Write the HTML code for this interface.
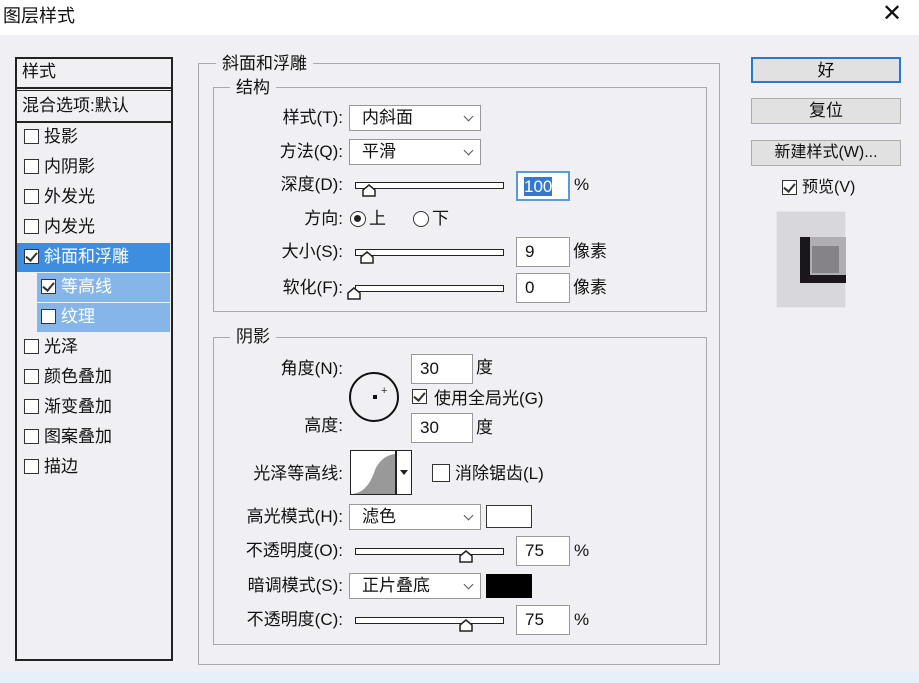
<!DOCTYPE html>
<html><head><meta charset="utf-8"><style>
*{margin:0;padding:0;box-sizing:border-box}
body{width:919px;height:683px;background:#f0eff3;font-family:"Liberation Sans","Noto Sans CJK SC",sans-serif;font-size:17px;color:#111;position:relative;overflow:hidden}
.a{position:absolute;white-space:nowrap;line-height:20px}
.r{text-align:right}
.box{position:absolute;border:1px solid #a9a9ad}
.cb{position:absolute;width:15px;height:15px;border:1px solid #333;background:#fff}
.cb.on::after{content:"";position:absolute;left:3px;top:0px;width:5px;height:9px;border:solid #333;border-width:0 2px 2px 0;transform:rotate(40deg)}
.sel{position:absolute;height:26px;border:1px solid #999;background:#fff;padding-left:12px;line-height:24px}
.sel::after{content:"";position:absolute;right:8px;top:7px;width:6px;height:6px;border:solid #555;border-width:0 1.5px 1.5px 0;transform:rotate(45deg)}
.inp{position:absolute;width:54px;height:30px;border:1px solid #999;background:#fff;padding-left:8px;line-height:28px}
.trk{position:absolute;height:7px;border:1.5px solid #222;background:#fff;width:149px}
.th{position:absolute;width:14px;height:13px}
.btn{position:absolute;left:751px;width:150px;height:26px;border:1px solid #adadad;background:#e1e1e1;text-align:center;line-height:24px}
.item{position:absolute;left:17px;width:153px;height:29px}
</style></head><body>
<div style="position:absolute;left:0;top:0;width:919px;height:35px;background:#fff"></div>
<div class="a" style="left:3px;top:6px;font-size:18px">图层样式</div>
<div class="a" style="left:882px;top:4px;font-size:24px;font-weight:300">✕</div>

<div style="position:absolute;left:15px;top:57px;width:158px;height:604px;border:2px solid #222;background:#f0eff3"></div>
<div class="a" style="left:22px;top:62px">样式</div>
<div style="position:absolute;left:16px;top:87px;width:156px;height:4px;border-top:2px solid #222;border-bottom:1px solid #222"></div>
<div class="a" style="left:22px;top:96px">混合选项:默认</div>
<div style="position:absolute;left:16px;top:121px;width:156px;border-top:2px solid #222"></div>
<div class="item" style="top:243px;background:#3d8ee0"></div>
<div class="item" style="top:273px;left:37px;width:133px;background:#86b6e9"></div>
<div class="item" style="top:303px;left:37px;width:133px;background:#86b6e9"></div>
<div class="cb" style="left:24px;top:129px"></div><div class="a" style="left:44px;top:127px">投影</div>
<div class="cb" style="left:24px;top:159px"></div><div class="a" style="left:44px;top:157px">内阴影</div>
<div class="cb" style="left:24px;top:189px"></div><div class="a" style="left:44px;top:187px">外发光</div>
<div class="cb" style="left:24px;top:219px"></div><div class="a" style="left:44px;top:217px">内发光</div>
<div class="cb on" style="left:24px;top:249px"></div><div class="a" style="left:44px;top:247px;color:#fff">斜面和浮雕</div>
<div class="cb on" style="left:41px;top:279px"></div><div class="a" style="left:61px;top:277px;color:#fff">等高线</div>
<div class="cb" style="left:41px;top:309px"></div><div class="a" style="left:61px;top:307px;color:#fff">纹理</div>
<div class="cb" style="left:24px;top:339px"></div><div class="a" style="left:44px;top:337px">光泽</div>
<div class="cb" style="left:24px;top:369px"></div><div class="a" style="left:44px;top:367px">颜色叠加</div>
<div class="cb" style="left:24px;top:399px"></div><div class="a" style="left:44px;top:397px">渐变叠加</div>
<div class="cb" style="left:24px;top:429px"></div><div class="a" style="left:44px;top:427px">图案叠加</div>
<div class="cb" style="left:24px;top:459px"></div><div class="a" style="left:44px;top:457px">描边</div>

<div class="box" style="left:198px;top:63px;width:522px;height:602px"></div>
<div class="a" style="left:216px;top:54px;background:#f0eff3;padding:0 6px">斜面和浮雕</div>
<div class="box" style="left:213px;top:87px;width:494px;height:225px"></div>
<div class="a" style="left:230px;top:78px;background:#f0eff3;padding:0 6px">结构</div>
<div class="box" style="left:213px;top:337px;width:494px;height:308px"></div>
<div class="a" style="left:230px;top:327px;background:#f0eff3;padding:0 6px">阴影</div>
<div style="position:absolute;left:0;top:672px;width:919px;height:11px;background:#e6f0fa"></div>

<div class="a r" style="right:576px;top:108px">样式(T):</div>
<div class="sel" style="left:349px;top:105px;width:132px">内斜面</div>
<div class="a r" style="right:576px;top:142px">方法(Q):</div>
<div class="sel" style="left:349px;top:139px;width:132px">平滑</div>
<div class="a r" style="right:576px;top:175px">深度(D):</div>
<div class="trk" style="left:355px;top:182px"></div>
<svg class="th" style="left:362px;top:184px" viewBox="0 0 14 13"><path d="M1 12V6L7 1L13 6V12Z" fill="#fff" stroke="#222" stroke-width="1.5"/></svg>
<div class="inp" style="left:516px;top:171px;border:2px solid #5a9ad8;padding-left:6px"><span style="background:#3478d0;color:#fff">100</span></div>
<div class="a" style="left:574px;top:175px">%</div>
<div class="a r" style="right:576px;top:209px">方向:</div>
<div style="position:absolute;left:350px;top:211px;width:16px;height:16px;border:1.5px solid #333;border-radius:50%;background:#fff"><div style="position:absolute;left:3px;top:3px;width:7px;height:7px;border-radius:50%;background:#222"></div></div>
<div class="a" style="left:369px;top:209px">上</div>
<div style="position:absolute;left:413px;top:211px;width:16px;height:16px;border:1.5px solid #333;border-radius:50%;background:#fff"></div>
<div class="a" style="left:432px;top:209px">下</div>
<div class="a r" style="right:576px;top:242px">大小(S):</div>
<div class="trk" style="left:355px;top:249px"></div>
<svg class="th" style="left:360px;top:251px" viewBox="0 0 14 13"><path d="M1 12V6L7 1L13 6V12Z" fill="#fff" stroke="#222" stroke-width="1.5"/></svg>
<div class="inp" style="left:516px;top:237px">9</div>
<div class="a" style="left:573px;top:242px">像素</div>
<div class="a r" style="right:576px;top:278px">软化(F):</div>
<div class="trk" style="left:355px;top:285px"></div>
<svg class="th" style="left:347px;top:287px" viewBox="0 0 14 13"><path d="M1 12V6L7 1L13 6V12Z" fill="#fff" stroke="#222" stroke-width="1.5"/></svg>
<div class="inp" style="left:516px;top:273px">0</div>
<div class="a" style="left:573px;top:278px">像素</div>

<div class="a r" style="right:576px;top:359px">角度(N):</div>
<div class="inp" style="left:411px;top:354px;width:62px">30</div>
<div class="a" style="left:476px;top:358px">度</div>
<div style="position:absolute;left:349px;top:372px;width:50px;height:50px;border:2px solid #111;border-radius:50%"></div>
<div style="position:absolute;left:373px;top:395px;width:4px;height:4px;background:#111"></div>
<div class="a" style="left:381px;top:381px;font-size:11px;color:#333">+</div>
<div class="cb on" style="left:412px;top:389px"></div>
<div class="a" style="left:434px;top:389px">使用全局光(G)</div>
<div class="a r" style="right:576px;top:416px">高度:</div>
<div class="inp" style="left:411px;top:413px;width:62px">30</div>
<div class="a" style="left:476px;top:418px">度</div>
<div class="a r" style="right:576px;top:464px">光泽等高线:</div>
<div style="position:absolute;left:350px;top:450px;width:62px;height:45px;border:1.5px solid #222;background:#fff;overflow:hidden">
<svg width="44" height="42" style="position:absolute;left:2px;top:1px" viewBox="0 0 44 42"><path d="M0 42C12 40 18 30 22 18C26 8 34 3 42 2V42Z" fill="#999"/></svg>
<div style="position:absolute;left:44px;top:0;width:1.5px;height:45px;background:#222"></div>
<div style="position:absolute;left:49px;top:19px;border:4px solid transparent;border-top:5px solid #222"></div>
</div>
<div class="cb" style="left:432px;top:464px;width:18px;height:18px"></div>
<div class="a" style="left:455px;top:464px">消除锯齿(L)</div>
<div class="a r" style="right:576px;top:507px">高光模式(H):</div>
<div class="sel" style="left:349px;top:504px;width:132px">滤色</div>
<div style="position:absolute;left:486px;top:505px;width:46px;height:23px;border:1.5px solid #333;background:#fff"></div>
<div class="a r" style="right:576px;top:541px">不透明度(O):</div>
<div class="trk" style="left:355px;top:548px"></div>
<svg class="th" style="left:459px;top:550px" viewBox="0 0 14 13"><path d="M1 12V6L7 1L13 6V12Z" fill="#fff" stroke="#222" stroke-width="1.5"/></svg>
<div class="inp" style="left:516px;top:536px">75</div>
<div class="a" style="left:574px;top:541px">%</div>
<div class="a r" style="right:576px;top:576px">暗调模式(S):</div>
<div class="sel" style="left:349px;top:573px;width:132px">正片叠底</div>
<div style="position:absolute;left:486px;top:574px;width:46px;height:24px;background:#000"></div>
<div class="a r" style="right:576px;top:610px">不透明度(C):</div>
<div class="trk" style="left:355px;top:617px"></div>
<svg class="th" style="left:459px;top:619px" viewBox="0 0 14 13"><path d="M1 12V6L7 1L13 6V12Z" fill="#fff" stroke="#222" stroke-width="1.5"/></svg>
<div class="inp" style="left:516px;top:605px">75</div>
<div class="a" style="left:574px;top:610px">%</div>

<div class="btn" style="top:57px;border:2px solid #2a78c8">好</div>
<div class="btn" style="top:98px">复位</div>
<div class="btn" style="top:140px;font-size:16px">新建样式(W)...</div>
<div class="cb on" style="left:782px;top:180px"></div>
<div class="a" style="left:802px;top:178px;font-size:16px">预览(V)</div>
<div style="position:absolute;left:776px;top:211px;width:70px;height:97px;background:#d8d7db;border:1px solid #e8e8ea"></div>
<div style="position:absolute;left:800px;top:237px;width:46px;height:46px;background:#1a161c"></div>
<div style="position:absolute;left:810px;top:237px;width:36px;height:38px;background:#b0aeb2"></div>
<div style="position:absolute;left:812px;top:246px;width:27px;height:27px;background:#858387"></div>
</body></html>
